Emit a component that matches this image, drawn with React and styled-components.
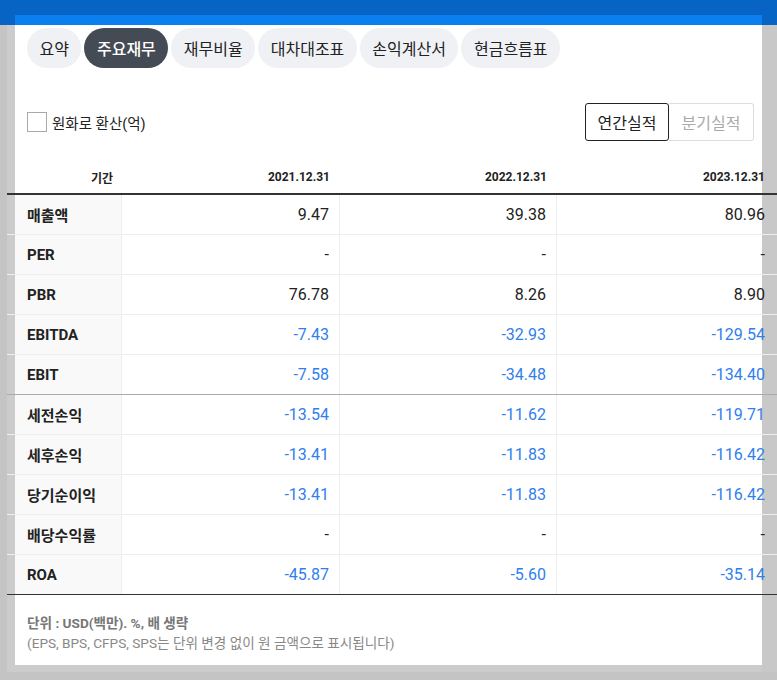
import React, { useState } from 'react'
import styled, { createGlobalStyle } from 'styled-components'

const GlobalStyle = createGlobalStyle`
  html, body {
    margin: 0;
    padding: 0;
    background: #c4c4c4;
  }
  body {
    font-family: Roboto, "Noto Sans CJK KR", "Noto Sans", sans-serif;
    color: #222;
  }
  * {
    box-sizing: border-box;
  }
`

const Page = styled.div`
  width: 777px;
  height: 680px;
  overflow: hidden;
  padding-top: 15px;
  background: linear-gradient(to bottom, #0864c4 25px, #c4c4c4 25px);
`

const Shell = styled.div`
  margin-left: 7px;
  width: 770px;
  height: 657px;
  padding-left: 8px;
  background: linear-gradient(to bottom, #0864c4 10px, transparent 10px),
    linear-gradient(to right, #cccccc 755px, #c8c8c8 755px);
`

const Panel = styled.div`
  width: 747px;
  height: 650px;
  border-top: 10px solid #0a7ff0;
  background: #fff;
  padding: 3px 0 0 12px;
`

const Tabs = styled.nav`
  display: flex;
  gap: 3px;
`

const Tab = styled.button`
  height: 40px;
  padding: 0 12.5px;
  border: none;
  border-radius: 20px;
  font-family: inherit;
  font-size: 16px;
  font-weight: ${(p) => (p.active ? 500 : 400)};
  color: ${(p) => (p.active ? '#fff' : '#222')};
  background: ${(p) => (p.active ? '#454b54' : '#f0f1f5')};
  cursor: pointer;
`

const Controls = styled.div`
  display: flex;
  align-items: center;
  justify-content: space-between;
  height: 38px;
  margin-top: 35px;
  padding-right: 8px;
`

const CheckLabel = styled.label`
  display: flex;
  align-items: center;
  gap: 5px;
  font-size: 14.5px;
  color: #222;
`

const Box = styled.span`
  width: 20px;
  height: 20px;
  border: 1px solid #aaa;
  background: #fff;
`

const Segment = styled.div`
  display: flex;
`

const SegButton = styled.button`
  width: ${(p) => (p.active ? '84px' : '85px')};
  height: 38px;
  font-family: inherit;
  font-size: 16px;
  background: #fff;
  color: ${(p) => (p.active ? '#222' : '#aaa')};
  border: 1px solid ${(p) => (p.active ? '#222' : '#ddd')};
  border-left-width: ${(p) => (p.active ? '1px' : '0')};
  border-radius: ${(p) => (p.active ? '3px' : '0 3px 3px 0')};
  cursor: pointer;
`

const Table = styled.div`
  margin: 20px 0 0 -20px;
  width: 770px;
`

const Row = styled.div`
  display: grid;
  grid-template-columns: 115px 218px 217px 220px;
  height: ${(p) => (p.head ? '34px' : '40px')};
  border-bottom: ${(p) => p.line};
`

const HeadCell = styled.div`
  display: flex;
  align-items: center;
  justify-content: flex-end;
  padding-right: ${(p) => (p.first ? '9px' : p.last ? '12px' : '10px')};
  font-size: 12px;
  font-weight: 700;
  color: #222;
`

const Label = styled.div`
  display: flex;
  align-items: center;
  padding-left: 20px;
  font-size: 15px;
  font-weight: 700;
  color: #222;
  background: linear-gradient(to right, transparent 8px, #f9f9f9 8px);
  border-right: 1px solid #eee;
`

const Value = styled.div`
  display: flex;
  align-items: center;
  justify-content: flex-end;
  padding-right: ${(p) => (p.last ? '12px' : '10px')};
  font-size: 16px;
  color: ${(p) => (p.neg ? '#2f80ed' : '#222')};
  border-right: ${(p) => (p.last ? 'none' : '1px solid #eee')};
`

const Footer = styled.div`
  margin-top: 18px;
  font-size: 13.6px;
  line-height: 20px;
  color: #888;
`

const Unit = styled.div`
  font-weight: 700;
  color: #777;
`

const tabs = ['요약', '주요재무', '재무비율', '대차대조표', '손익계산서', '현금흐름표']
const dates = ['2021.12.31', '2022.12.31', '2023.12.31']

const rows = [
  ['매출액', '9.47', '39.38', '80.96'],
  ['PER', '-', '-', '-'],
  ['PBR', '76.78', '8.26', '8.90'],
  ['EBITDA', '-7.43', '-32.93', '-129.54'],
  ['EBIT', '-7.58', '-34.48', '-134.40'],
  ['세전손익', '-13.54', '-11.62', '-119.71'],
  ['세후손익', '-13.41', '-11.83', '-116.42'],
  ['당기순이익', '-13.41', '-11.83', '-116.42'],
  ['배당수익률', '-', '-', '-'],
  ['ROA', '-45.87', '-5.60', '-35.14'],
]

function lineFor(i) {
  if (i === rows.length - 1) return '1px solid #333'
  if (i === 4) return '1px solid #aaa'
  return '1px solid #eee'
}

export default function App() {
  const [tab, setTab] = useState(1)
  const [annual, setAnnual] = useState(true)

  return (
    <Page>
      <GlobalStyle />
      <Shell>
        <Panel>
          <Tabs>
            {tabs.map((t, i) => (
              <Tab key={t} active={i === tab} onClick={() => setTab(i)}>
                {t}
              </Tab>
            ))}
          </Tabs>

          <Controls>
            <CheckLabel>
              <Box />
              원화로 환산(억)
            </CheckLabel>
            <Segment>
              <SegButton active={annual} onClick={() => setAnnual(true)}>
                연간실적
              </SegButton>
              <SegButton active={!annual} onClick={() => setAnnual(false)}>
                분기실적
              </SegButton>
            </Segment>
          </Controls>

          <Table>
            <Row head line="2px solid #333">
              <HeadCell first>기간</HeadCell>
              {dates.map((d, j) => (
                <HeadCell key={d} last={j === 2}>
                  {d}
                </HeadCell>
              ))}
            </Row>
            {rows.map(([name, ...vals], i) => (
              <Row key={name} line={lineFor(i)}>
                <Label>{name}</Label>
                {vals.map((v, j) => (
                  <Value key={j} neg={v.startsWith('-') && v.length > 1} last={j === 2}>
                    {v}
                  </Value>
                ))}
              </Row>
            ))}
          </Table>

          <Footer>
            <Unit>단위 : USD(백만). %, 배 생략</Unit>
            <div>(EPS, BPS, CFPS, SPS는 단위 변경 없이 원 금액으로 표시됩니다)</div>
          </Footer>
        </Panel>
      </Shell>
    </Page>
  )
}
